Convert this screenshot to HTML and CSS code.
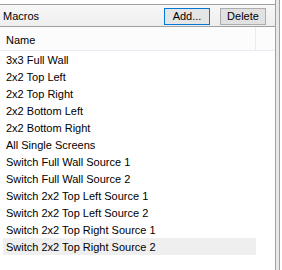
FILE: index.html
```html
<!DOCTYPE html>
<html lang="en">
<head>
    <meta charset="UTF-8">
    <title>Macros</title>
    <link rel="stylesheet" href="styles.css">
</head>
<body>
<div id="frame">
    <div id="main">
        <div class="toolbar">
            <span class="title">Macros</span>
            <button class="btn focused">Add...</button>
            <button class="btn">Delete</button>
        </div>
        <div class="colHead">
            <div class="colName">Name</div>
            <div class="colRest"></div>
        </div>
        <ul class="list">
            <li>3x3 Full Wall</li>
            <li>2x2 Top Left</li>
            <li>2x2 Top Right</li>
            <li>2x2 Bottom Left</li>
            <li>2x2 Bottom Right</li>
            <li>All Single Screens</li>
            <li>Switch Full Wall Source 1</li>
            <li>Switch Full Wall Source 2</li>
            <li>Switch 2x2 Top Left Source 1</li>
            <li>Switch 2x2 Top Left Source 2</li>
            <li>Switch 2x2 Top Right Source 1</li>
            <li class="hover">Switch 2x2 Top Right Source 2</li>
        </ul>
    </div>
    <div class="splitter"></div>
</div>
</body>
</html>
```

FILE: styles.css
```css
* {
    margin: 0;
    padding: 0;
    box-sizing: border-box;
}

html, body {
    width: 282px;
    height: 270px;
    overflow: hidden;
    background-color: #ffffff;
    font-family: "Liberation Sans", Arial, sans-serif;
    font-size: 11px;
    color: #000000;
}

#frame {
    display: flex;
    height: 270px;
}

#main {
    width: 275px;
    padding-top: 4px;
}

.splitter {
    width: 5px;
    height: 100%;
    border-left: 1px solid #a0a0a0;
    border-right: 1px solid #a0a0a0;
    background-color: #e8e8e8;
}

.toolbar {
    height: 23px;
    border-top: 1px solid #a0a0a0;
    border-bottom: 1px solid #a0a0a0;
    background: linear-gradient(#f7f7f7, #eeeeee);
    display: flex;
    align-items: flex-start;
    padding: 2px 9px 0 3px;
}

.title {
    flex: 1;
    line-height: 16px;
    margin-top: 1px;
}

.btn {
    width: 46px;
    height: 17px;
    margin-top: 1px;
    border: 1px solid #adadad;
    background-color: #e1e1e1;
    font-family: "Liberation Sans", Arial, sans-serif;
    font-size: 11px;
    color: #000000;
    line-height: 15px;
    text-align: center;
}

.btn + .btn {
    margin-left: 10px;
}

.btn.focused {
    border-color: #0078d7;
    background-color: #e5e5e5;
}

.colHead {
    display: flex;
    height: 24px;
    border-bottom: 1px solid #e5ecf4;
    background-color: #fcfcfc;
}

.colName {
    width: 256px;
    border-right: 1px solid #e5ecf4;
    padding: 7px 0 0 6px;
    line-height: 12px;
}

.colRest {
    flex: 1;
}

.list {
    list-style: none;
}

.list li {
    height: 17px;
    line-height: 15px;
    padding-top: 2px;
    width: 253px;
    margin-left: 3px;
    padding-left: 3px;
}

.list .hover {
    background-color: #efefef;
}
```
